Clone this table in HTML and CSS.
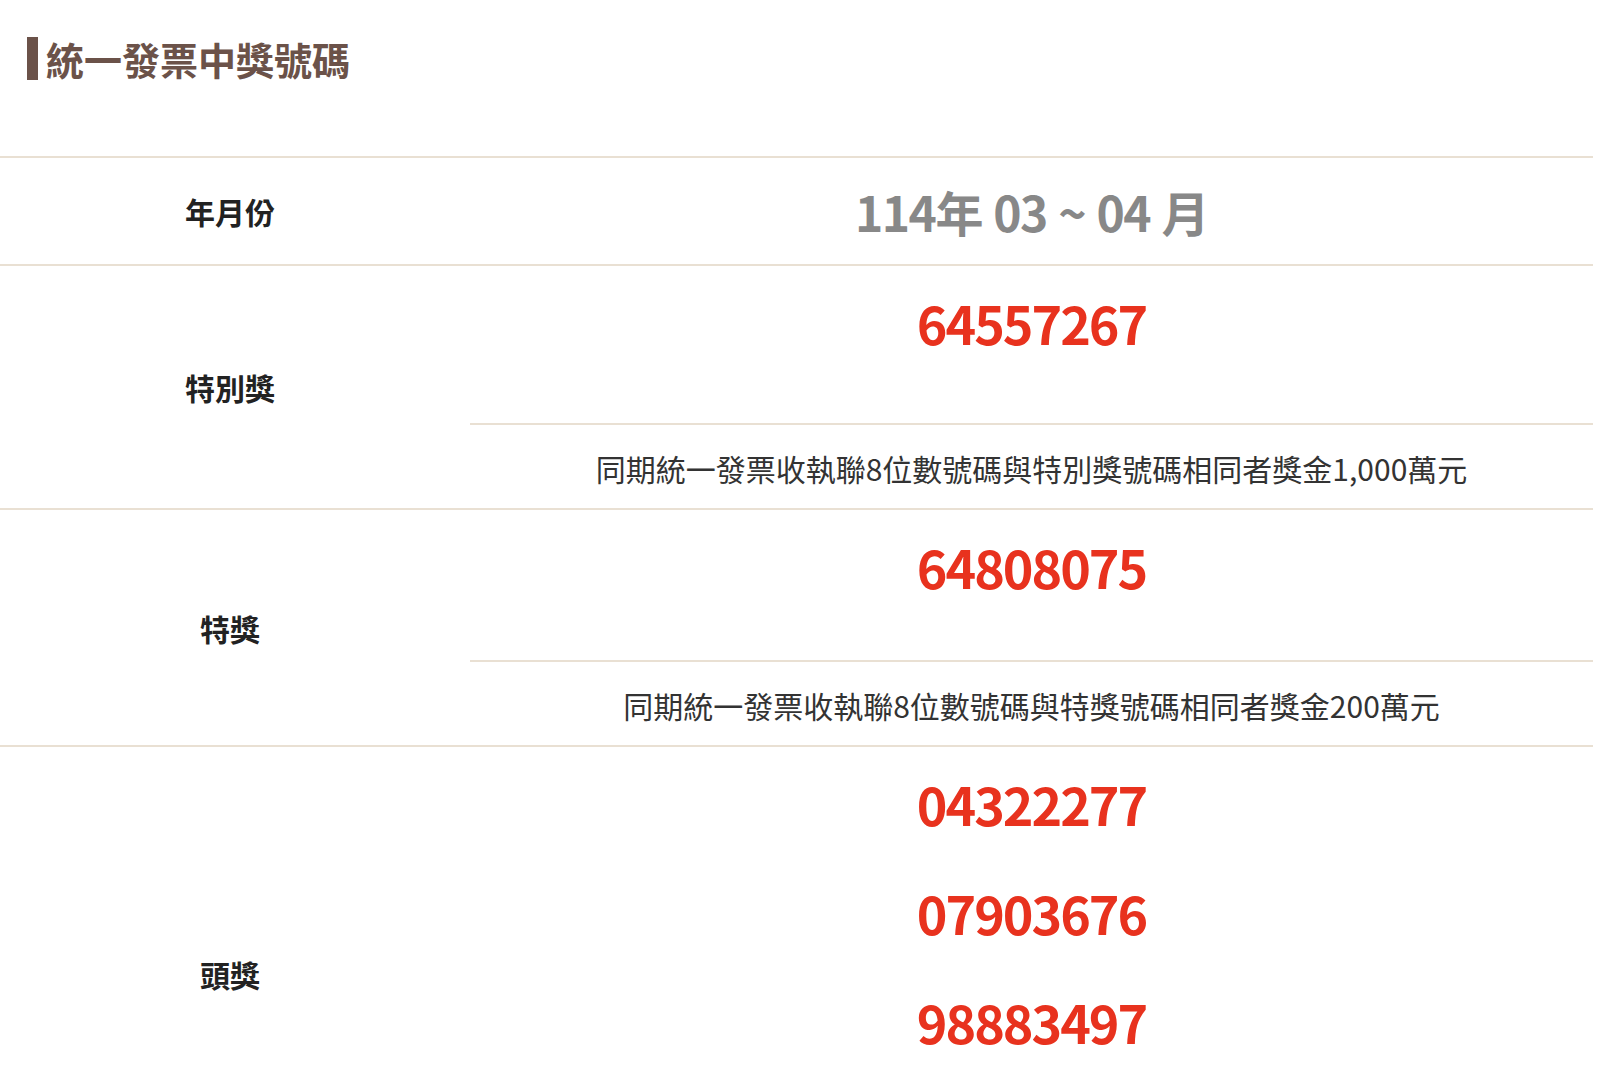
FILE: index.html
```html
<!DOCTYPE html>
<html lang="zh-Hant">
<head>
<meta charset="utf-8">
<title>統一發票中獎號碼</title>
<link rel="stylesheet" href="styles.css">
</head>
<body>
<main class="page">
  <h2 class="title">統一發票中獎號碼</h2>
  <table class="prize-table">
    <tbody>
      <tr>
        <th class="label">年月份</th>
        <td class="period">114年 03 ~ 04 月</td>
      </tr>
      <tr>
        <th class="label" rowspan="2">特別獎</th>
        <td class="num-cell num-cell--tall"><div class="num">64557267</div></td>
      </tr>
      <tr>
        <td class="desc">同期統一發票收執聯8位數號碼與特別獎號碼相同者獎金1,000萬元</td>
      </tr>
      <tr>
        <th class="label" rowspan="2">特獎</th>
        <td class="num-cell"><div class="num">64808075</div></td>
      </tr>
      <tr>
        <td class="desc">同期統一發票收執聯8位數號碼與特獎號碼相同者獎金200萬元</td>
      </tr>
      <tr>
        <th class="label">頭獎</th>
        <td class="num-cell num-cell--list">
          <div class="num">04322277</div>
          <div class="num">07903676</div>
          <div class="num">98883497</div>
        </td>
      </tr>
    </tbody>
  </table>
</main>
</body>
</html>
```

FILE: styles.css
```css
html, body {
  margin: 0;
  padding: 0;
  background: #ffffff;
}

body {
  font-family: "Noto Sans CJK TC", "Noto Sans", sans-serif;
  color: #222222;
}

.page {
  padding: 37px 7px 0 0;
}

.title {
  margin: 0 0 76px 27px;
  padding-left: 8px;
  border-left: 11px solid #6b5249;
  font-size: 38px;
  line-height: 43px;
  font-weight: 700;
  color: #6b5249;
}

.prize-table {
  width: 100%;
  border-collapse: collapse;
  border-top: 2px solid #e9e0d3;
}

.prize-table th,
.prize-table td {
  border-bottom: 2px solid #e9e0d3;
  padding: 0;
  text-align: center;
  vertical-align: middle;
}

.label {
  width: 460px;
  padding-right: 10px !important;
  font-size: 30px;
  font-weight: 700;
  color: #222222;
}

.period {
  height: 106px;
  font-size: 48px;
  font-weight: 700;
  color: #888888;
  line-height: 66px;
  letter-spacing: -1.5px;
  word-spacing: 2px;
}

.num-cell {
  padding: 22px 0 58px !important;
}

.num-cell--tall {
  padding-bottom: 65px !important;
}

.num-cell--list {
  padding-bottom: 143px !important;
}

.num {
  font-size: 52px;
  font-weight: 700;
  line-height: 70px;
  letter-spacing: -2px;
  color: #e8321e;
}

.num + .num {
  margin-top: 39px;
}

.desc {
  padding: 22px 0 18px !important;
  font-size: 30px;
  line-height: 43px;
  color: #333333;
}
```
